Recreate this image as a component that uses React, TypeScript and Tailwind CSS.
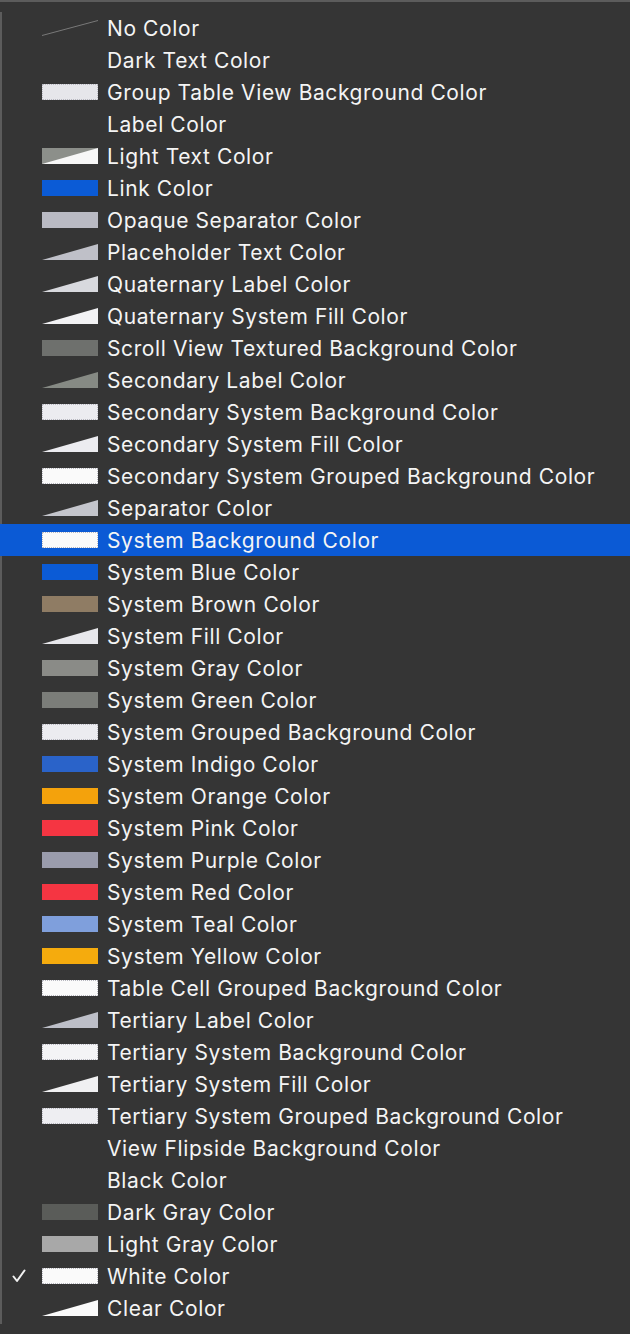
import React from "react";

type Swatch =
  | { kind: "none" }
  | { kind: "line" }
  | { kind: "solid"; color: string; border?: boolean }
  | { kind: "tri"; color: string; back?: string };

interface Item {
  name: string;
  swatch: Swatch;
}

const items: Item[] = [
  { name: "No Color", swatch: { kind: "line" } },
  { name: "Dark Text Color", swatch: { kind: "none" } },
  { name: "Group Table View Background Color", swatch: { kind: "solid", color: "#e6e6ea", border: true } },
  { name: "Label Color", swatch: { kind: "none" } },
  { name: "Light Text Color", swatch: { kind: "tri", color: "#f7f7f7", back: "#8c8f8a" } },
  { name: "Link Color", swatch: { kind: "solid", color: "#0b5bd6" } },
  { name: "Opaque Separator Color", swatch: { kind: "solid", color: "#b9bac3" } },
  { name: "Placeholder Text Color", swatch: { kind: "tri", color: "#bfc0c8" } },
  { name: "Quaternary Label Color", swatch: { kind: "tri", color: "#d8d9de" } },
  { name: "Quaternary System Fill Color", swatch: { kind: "tri", color: "#f2f2f4" } },
  { name: "Scroll View Textured Background Color", swatch: { kind: "solid", color: "#6e706d" } },
  { name: "Secondary Label Color", swatch: { kind: "tri", color: "#868a84" } },
  { name: "Secondary System Background Color", swatch: { kind: "solid", color: "#ececf0", border: true } },
  { name: "Secondary System Fill Color", swatch: { kind: "tri", color: "#ececf0" } },
  { name: "Secondary System Grouped Background Color", swatch: { kind: "solid", color: "#fafafa", border: true } },
  { name: "Separator Color", swatch: { kind: "tri", color: "#c4c5cc" } },
  { name: "System Background Color", swatch: { kind: "solid", color: "#fafafa", border: true } },
  { name: "System Blue Color", swatch: { kind: "solid", color: "#0b5bd6" } },
  { name: "System Brown Color", swatch: { kind: "solid", color: "#8f7c64" } },
  { name: "System Fill Color", swatch: { kind: "tri", color: "#e8e8ec" } },
  { name: "System Gray Color", swatch: { kind: "solid", color: "#8a8b87" } },
  { name: "System Green Color", swatch: { kind: "solid", color: "#7b7d79" } },
  { name: "System Grouped Background Color", swatch: { kind: "solid", color: "#ececf0", border: true } },
  { name: "System Indigo Color", swatch: { kind: "solid", color: "#2a63c9" } },
  { name: "System Orange Color", swatch: { kind: "solid", color: "#f4a20c" } },
  { name: "System Pink Color", swatch: { kind: "solid", color: "#f53542" } },
  { name: "System Purple Color", swatch: { kind: "solid", color: "#9a9cac" } },
  { name: "System Red Color", swatch: { kind: "solid", color: "#f53542" } },
  { name: "System Teal Color", swatch: { kind: "solid", color: "#7f9fdc" } },
  { name: "System Yellow Color", swatch: { kind: "solid", color: "#f5ab0d" } },
  { name: "Table Cell Grouped Background Color", swatch: { kind: "solid", color: "#fafafa", border: true } },
  { name: "Tertiary Label Color", swatch: { kind: "tri", color: "#bdbfc8" } },
  { name: "Tertiary System Background Color", swatch: { kind: "solid", color: "#f4f4f6", border: true } },
  { name: "Tertiary System Fill Color", swatch: { kind: "tri", color: "#f0f0f2" } },
  { name: "Tertiary System Grouped Background Color", swatch: { kind: "solid", color: "#eeeef2", border: true } },
  { name: "View Flipside Background Color", swatch: { kind: "none" } },
  { name: "Black Color", swatch: { kind: "none" } },
  { name: "Dark Gray Color", swatch: { kind: "solid", color: "#5a5c59" } },
  { name: "Light Gray Color", swatch: { kind: "solid", color: "#a8a8a8" } },
  { name: "White Color", swatch: { kind: "solid", color: "#fafafa", border: true } },
  { name: "Clear Color", swatch: { kind: "tri", color: "#fafafa" } },
];

const SELECTED = "System Background Color";
const CHECKED = "White Color";

function SwatchView({ swatch }: { swatch: Swatch }) {
  if (swatch.kind === "none") return <div className="h-4 w-14" />;
  if (swatch.kind === "line") {
    return (
      <svg width="56" height="16" viewBox="0 0 56 16" className="block">
        <line x1="0" y1="15.5" x2="56" y2="0.5" stroke="#8a8a8a" strokeWidth="0.8" />
      </svg>
    );
  }
  if (swatch.kind === "tri") {
    return (
      <svg width="56" height="16" viewBox="0 0 56 16" className="block">
        {swatch.back && <rect x="0" y="0" width="56" height="16" fill={swatch.back} />}
        <polygon points="0,16 56,0 56,16" fill={swatch.color} />
      </svg>
    );
  }
  return (
    <div
      className={
        swatch.border
          ? "h-4 w-14 border border-dotted border-[#b8b8c0]"
          : "h-4 w-14"
      }
      style={{ backgroundColor: swatch.color }}
    />
  );
}

function Check() {
  return (
    <svg width="14" height="14" viewBox="0 0 14 14" className="block">
      <polyline
        points="1.5,7.5 5,12 12.5,1.5"
        fill="none"
        stroke="#f2f2f2"
        strokeWidth="2"
        strokeLinecap="round"
        strokeLinejoin="round"
      />
    </svg>
  );
}

export default function App() {
  return (
    <div
      className="min-h-[1334px] w-[630px] border-t-2 border-[#5c5c5c] bg-[#353535] pt-[10px]"
      style={{ fontFamily: "Inter, 'Liberation Sans', sans-serif" }}
    >
      {items.map((item) => {
        const selected = item.name === SELECTED;
        return (
          <div
            key={item.name}
            className={
              selected
                ? "flex h-8 items-center bg-[#0b5ad5]"
                : "flex h-8 items-center border-l-2 border-[#5c5c5c]"
            }
          >
            <div className={selected ? "flex w-[42px] items-center pl-3" : "flex w-[40px] items-center pl-[10px]"}>
              {item.name === CHECKED && <Check />}
            </div>
            <SwatchView swatch={item.swatch} />
            <span className="ml-[9px] whitespace-nowrap text-[21px] leading-none tracking-[0.6px] text-[#f4f4f4]">
              {item.name}
            </span>
          </div>
        );
      })}
    </div>
  );
}
